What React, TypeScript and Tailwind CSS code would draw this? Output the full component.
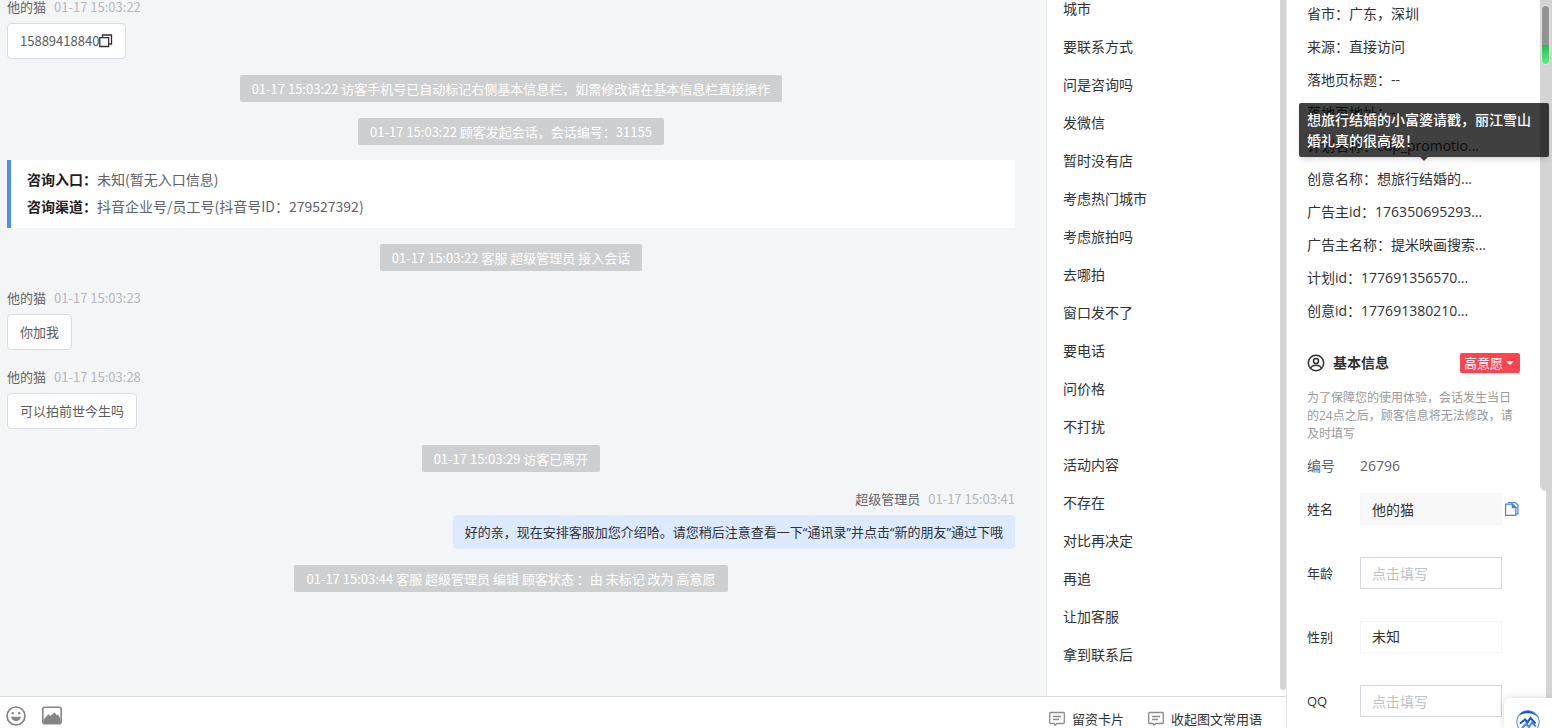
import type { ReactNode } from 'react';

const phrases = [
  '城市', '要联系方式', '问是咨询吗', '发微信', '暂时没有店', '考虑热门城市',
  '考虑旅拍吗', '去哪拍', '窗口发不了', '要电话', '问价格', '不打扰',
  '活动内容', '不存在', '对比再决定', '再追', '让加客服', '拿到联系后',
];

const visitInfo = [
  ['省市', '广东，深圳'],
  ['来源', '直接访问'],
  ['落地页标题', '--'],
  ['落地页地址', '--'],
  ['计划名称', 'cdp_promotio...'],
  ['创意名称', '想旅行结婚的...'],
  ['广告主id', '176350695293...'],
  ['广告主名称', '提米映画搜索...'],
  ['计划id', '177691356570...'],
  ['创意id', '177691380210...'],
];

function Notice({ children }: { children: ReactNode }) {
  return (
    <div className="self-center rounded-xs bg-[#cecfd1] px-3 pt-px text-[13px] leading-[26px] text-white">
      {children}
    </div>
  );
}

function Message({ name, time, mine, children }: { name: string; time: string; mine?: boolean; children: ReactNode }) {
  return (
    <div className={mine ? 'flex flex-col items-end' : 'flex flex-col items-start'}>
      <div className="mb-[5px] flex h-[22px] items-center gap-2 text-[13px] leading-5">
        <span className="text-[#606266]">{name}</span>
        <time className="text-[#b4b7bd]">{time}</time>
      </div>
      {mine ? (
        <p className="rounded-sm bg-[#dce9ff] px-3 py-[7px] font-['Open_Sans','Noto_Sans_CJK_SC',sans-serif] text-[13px] leading-5 text-[#303133]">
          {children}
        </p>
      ) : (
        <p className="flex items-center rounded-sm border border-[#d9dce2] bg-white px-3 py-[7px] text-[13px] leading-5 text-[#5a5c60]">
          {children}
        </p>
      )}
    </div>
  );
}

function CardIcon() {
  return (
    <svg className="h-4 w-4" viewBox="0 0 16 16" fill="none" stroke="#8c8c8c" strokeWidth="1.3">
      <path d="M1.5 1.500h13a.8.8 0 0 1 .8.8v9.400a.8.8 0 0 1-.8.8H7.800l-1.800 1.800-1-1.800H1.500a.8.8 0 0 1-.8-.8V2.300a.8.8 0 0 1 .8-.8z" />
      <path d="M4 5.500h8M4 8.500h6" />
    </svg>
  );
}

function Field({ id, label, children }: { id: string; label: string; children: ReactNode }) {
  return (
    <div className="flex h-8 items-center">
      <label htmlFor={id} className="w-[53px] text-[13px] text-[#303133]">{label}</label>
      {children}
    </div>
  );
}

export default function App() {
  return (
    <div className="relative flex h-screen overflow-hidden bg-white font-['Open_Sans','Noto_Sans_CJK_SC',sans-serif] text-sm text-[#303133]">
      <div className="flex min-w-0 flex-1 flex-col">
        <div className="flex min-h-0 flex-1">
          {/* Conversation */}
          <main className="flex min-w-0 flex-1 flex-col overflow-hidden bg-[#f4f5f7] pr-[31px] pl-[7px] font-['Noto_Sans_CJK_SC',sans-serif]">
            <div className="-mt-1 flex flex-col gap-4">
              <Message name="他的猫" time="01-17 15:03:22">
                15889418840
                <button type="button" aria-label="复制">
                  <svg className="h-3.5 w-3.5" viewBox="0 0 14 14" fill="none" stroke="#303133" strokeWidth="1.3">
                    <path d="M.8 3.700h8.800v8.800H.8zM3.500 3.500V1h9v9H10" />
                  </svg>
                </button>
              </Message>
              <Notice>01-17 15:03:22 访客手机号已自动标记右侧基本信息栏，如需修改请在基本信息栏直接操作</Notice>
              <Notice>01-17 15:03:22 顾客发起会话，会话编号：31155</Notice>
              <div className="-mt-px border-l-4 border-[#4f8eee] bg-white pt-1.5 pb-2 pl-4 leading-[27px] text-[#606266]">
                <p><b className="text-[#1f2023]">咨询入口：</b>未知(暂无入口信息)</p>
                <p><b className="text-[#1f2023]">咨询渠道：</b>抖音企业号/员工号(抖音号ID：279527392)</p>
              </div>
              <Notice>01-17 15:03:22 客服 超级管理员 接入会话</Notice>
              <Message name="他的猫" time="01-17 15:03:23">你加我</Message>
              <Message name="他的猫" time="01-17 15:03:28">可以拍前世今生吗</Message>
              <Notice>01-17 15:03:29 访客已离开</Notice>
              <Message name="超级管理员" time="01-17 15:03:41" mine>
                好的亲，现在安排客服加您介绍哈。请您稍后注意查看一下“通讯录”并点击“新的朋友”通过下哦
              </Message>
              <Notice>01-17 15:03:44 客服 超级管理员 编辑 顾客状态 ：由 未标记 改为 高意愿</Notice>
            </div>
          </main>

          {/* Quick replies */}
          <nav className="flex w-60 justify-between overflow-hidden border-l border-[#e6e7ea]">
            <ul className="-mt-2.5 pl-4">
              {phrases.map((p) => (
                <li key={p} className="flex h-[38px] items-center">
                  <button type="button">{p}</button>
                </li>
              ))}
            </ul>
            <div className="mb-1.5 w-1.5 rounded-b-full bg-[#d4d4d4]" />
          </nav>
        </div>

        <footer className="flex h-8 items-start justify-between border-t border-[#d8d9dc] pr-6 pl-1.5">
          <div className="flex gap-4 pt-[9px]">
            <button type="button" aria-label="表情">
              <svg className="h-5 w-5" viewBox="0 0 20 20">
                <circle cx="10" cy="10" r="9" fill="none" stroke="#858585" strokeWidth="1.700" />
                <circle cx="6.800" cy="7.300" r="1.200" fill="#858585" />
                <circle cx="13.200" cy="7.300" r="1.200" fill="#858585" />
                <path d="M5 10.800h10c-.5 2.800-2.500 4.400-5 4.400s-4.500-1.600-5-4.400z" fill="#858585" />
              </svg>
            </button>
            <button type="button" aria-label="图片">
              <svg className="h-5 w-5" viewBox="0 0 20 20">
                <rect x=".8" y="1.300" width="18.400" height="16.400" rx="2" fill="none" stroke="#858585" strokeWidth="1.600" />
                <path d="M1.500 17v-3.500L6.500 8.300l2.200 1.700 3.800-3.700 2.200 3 1.300-.8 2.500 4.500v4z" fill="#858585" />
              </svg>
            </button>
          </div>
          <div className="flex gap-6 pt-3 text-[13px] leading-5">
            <button type="button" className="flex items-center gap-[7px]"><CardIcon />留资卡片</button>
            <button type="button" className="flex items-center gap-[7px]"><CardIcon />收起图文常用语</button>
          </div>
        </footer>
      </div>

      {/* Customer details */}
      <aside className="flex w-[266px] border-l border-[#e6e7ea]">
        <div className="min-w-0 flex-1 pr-5 pl-5">
          <div className="relative">
            <dl className="-mt-[3px]">
              {visitInfo.map(([k, v]) => (
                <div key={k} className="flex h-[33px] items-center whitespace-nowrap">
                  <dt>{k}：</dt>
                  <dd>{v}</dd>
                </div>
              ))}
            </dl>
            <div
              role="tooltip"
              className="absolute top-[106px] -left-2 z-10 w-[250px] rounded-xs bg-black/75 px-2 py-1.5 leading-[21px] font-medium text-white shadow-md"
            >
              想旅行结婚的小富婆请戳，丽江雪山婚礼真的很高级！
              <span className="absolute top-full left-1/2 -translate-x-1/2 border-x-4 border-t-4 border-x-transparent border-t-black/75" />
            </div>
          </div>

          <div className="mt-[26px] flex h-5 items-center">
            <svg className="h-[18px] w-[18px]" viewBox="0 0 18 18" fill="none" stroke="#303133" strokeWidth="1.500">
              <circle cx="9" cy="9" r="7.700" />
              <circle cx="9" cy="7" r="2.500" />
              <path d="M3.800 14.200c.8-2 2.600-2.900 5.200-2.900s4.400.9 5.200 2.900" />
            </svg>
            <h2 className="flex-1 pl-2 font-semibold">基本信息</h2>
            <button type="button" className="flex h-5 items-center gap-px rounded-xs bg-[#ff4450] px-1 text-[13px] text-white">
              高意愿
              <span className="mx-0.5 border-x-4 border-t-4 border-x-transparent border-t-white" />
            </button>
          </div>
          <p className="mt-4 text-xs leading-[18px] text-[#999]">
            为了保障您的使用体验，会话发生当日的24点之后，顾客信息将无法修改，请及时填写
          </p>
          <div className="mt-[13px] mb-[17px] flex h-5 items-center text-[#606266]">
            <span className="w-[53px]">编号</span>
            <span>26796</span>
          </div>
          <form className="flex flex-col gap-8">
            <Field id="name" label="姓名">
              <input id="name" defaultValue="他的猫" className="h-8 w-[142px] border border-[#f5f5f5] bg-[#f8f8f8] px-[11px]" />
              <button type="button" aria-label="复制姓名" className="ml-0.5">
                <svg className="h-4 w-4" viewBox="0 0 16 16" fill="none" stroke="#4080ee" strokeWidth="1.200">
                  <path d="M1.600 3.200h6.900l3.300 3.300v7.900H1.600z" />
                  <path d="M8.300 3.200v3.500h3.500z" fill="#4080ee" />
                  <path d="M3.800 1.500h7.600l2.500 2.500v8.800h-1.800" />
                </svg>
              </button>
            </Field>
            <Field id="age" label="年龄">
              <input id="age" placeholder="点击填写" className="h-8 w-[142px] border border-[#d4d6da] px-[11px] placeholder:text-[#bfc1c5]" />
            </Field>
            <Field id="gender" label="性别">
              <select id="gender" className="h-8 w-[142px] appearance-none border border-[#f3f3f3] bg-white px-[11px]">
                <option>未知</option>
              </select>
            </Field>
            <Field id="qq" label="QQ">
              <input id="qq" placeholder="点击填写" className="h-8 w-[142px] border border-[#d4d6da] px-[11px] placeholder:text-[#bfc1c5]" />
            </Field>
          </form>
        </div>
        <div className="h-[491px] w-1.5 rounded-bl-full bg-[#d4d4d4]" />
        <div className="w-1.5 bg-[#d4d4d4]" />
      </aside>

      {/* Floating scroll indicator */}
      <div className="absolute top-[5px] right-0.5 flex h-[60px] w-[9px] flex-col overflow-hidden rounded-full border border-[#e4e4e4]">
        <div className="flex-2 bg-[#929292]" />
        <div className="flex-1 bg-linear-to-b from-[#27b755] to-[#5cf07c]" />
      </div>

      {/* Assistant launcher */}
      <button
        type="button"
        aria-label="助手"
        className="absolute right-0 bottom-0 flex h-[30px] w-12 items-start justify-center overflow-hidden rounded-tl-md bg-white pt-3 shadow-[0_0_8px_rgba(0,0,0,0.15)]"
      >
        <svg className="h-6 w-6 shrink-0" viewBox="0 0 24 24" fill="none">
          <circle cx="12" cy="12" r="11.200" stroke="#6f9be8" strokeWidth="1.200" />
          <path d="M3 5.200C7-1 17-1 22.500 8c-4-5-11-6.500-19.500-2.800z" fill="#1558d0" />
          <path d="M4 13.500l5-4 2.500 3 3-4.500 5 5.500" stroke="#1558d0" strokeWidth="2.200" />
          <path d="M6 18l4-4 3 3 3-4.500 4 4" stroke="#4a84ea" strokeWidth="2" />
        </svg>
      </button>
    </div>
  );
}
